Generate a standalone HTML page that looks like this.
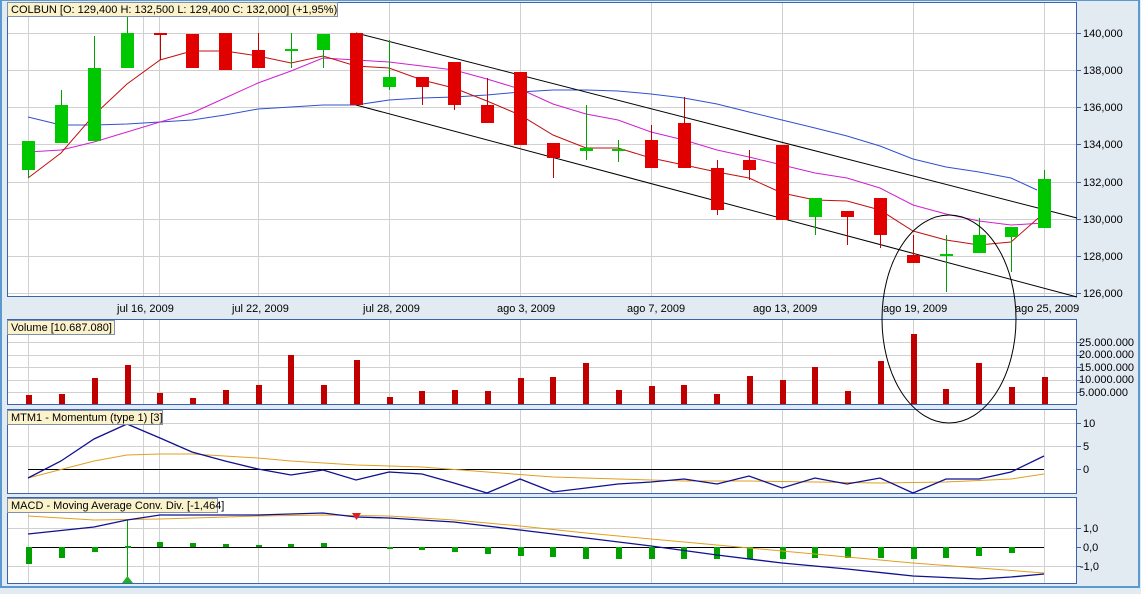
<!DOCTYPE html><html><head><meta charset="utf-8"><style>
body{margin:0;width:1141px;height:589px;overflow:hidden;background:#e2eaf2;font-family:"Liberation Sans",sans-serif}
svg text{font-family:"Liberation Sans",sans-serif;font-size:11px;fill:#000}
</style></head><body>
<svg width="1141" height="589" viewBox="0 0 1141 589" xmlns="http://www.w3.org/2000/svg">
<rect x="0" y="0" width="1141" height="589" fill="#e2eaf2"/>
<rect x="1" y="0" width="1138" height="587" fill="none" stroke="#5a9ad0" stroke-width="2"/>
<rect x="7.5" y="2.5" width="1069" height="294" fill="#fff" stroke="#3a62b0"/>
<rect x="7.5" y="319.5" width="1069" height="85" fill="#fff" stroke="#3a62b0"/>
<rect x="7.5" y="409.5" width="1069" height="84" fill="#fff" stroke="#3a62b0"/>
<rect x="7.5" y="497.5" width="1069" height="86" fill="#fff" stroke="#3a62b0"/>
<g stroke="#d0d0d0" stroke-width="1">
<path d="M8 33.5H1076M8 70.5H1076M8 107.5H1076M8 144.5H1076M8 182.5H1076M8 219.5H1076M8 256.5H1076M8 293.5H1076"/>
<path d="M8 342.5H1076M8 355.5H1076M8 367.5H1076M8 380.5H1076M8 392.5H1076"/>
<path d="M8 423.5H1076M8 446.5H1076"/>
<path d="M8 528.5H1076M8 566.5H1076"/>
<path d="M28.5 3V296M143.5 3V296M159.5 3V296M258.5 3V296M389.5 3V296M520.5 3V296M651.5 3V296M782.5 3V296M913.5 3V296M1044.5 3V296"/>
<path d="M28.5 320V404M143.5 320V404M159.5 320V404M258.5 320V404M389.5 320V404M520.5 320V404M651.5 320V404M782.5 320V404M913.5 320V404M1044.5 320V404"/>
<path d="M28.5 410V493M143.5 410V493M159.5 410V493M258.5 410V493M389.5 410V493M520.5 410V493M651.5 410V493M782.5 410V493M913.5 410V493M1044.5 410V493"/>
<path d="M28.5 498V583M143.5 498V583M159.5 498V583M258.5 498V583M389.5 498V583M520.5 498V583M651.5 498V583M782.5 498V583M913.5 498V583M1044.5 498V583"/>
</g>
<g stroke="#3a62b0"><path d="M1077 33.5h4M1077 70.5h4M1077 107.5h4M1077 144.5h4M1077 182.5h4M1077 219.5h4M1077 256.5h4M1077 293.5h4M1077 342.5h4M1077 355.5h4M1077 367.5h4M1077 380.5h4M1077 392.5h4M1077 423.5h4M1077 446.5h4M1077 469.5h4M1077 528.5h4M1077 547.5h4M1077 566.5h4"/></g>
<g>
<text x="1083" y="37">140,000</text><text x="1083" y="74">138,000</text><text x="1083" y="111">136,000</text><text x="1083" y="148">134,000</text><text x="1083" y="186">132,000</text><text x="1083" y="223">130,000</text><text x="1083" y="260">128,000</text><text x="1083" y="297">126,000</text>
<text x="1079" y="346">25.000.000</text><text x="1079" y="358">20.000.000</text><text x="1079" y="371">15.000.000</text><text x="1079" y="383">10.000.000</text><text x="1079" y="396">5.000.000</text>
<text x="1083" y="427">10</text><text x="1083" y="450">5</text><text x="1083" y="473">0</text>
<text x="1083" y="532">1,0</text><text x="1083" y="551">0,0</text><text x="1080" y="570">-1,0</text>
<text x="117" y="312">jul 16, 2009</text><text x="232" y="312">jul 22, 2009</text><text x="363" y="312">jul 28, 2009</text><text x="497" y="312">ago 3, 2009</text><text x="627" y="312">ago 7, 2009</text><text x="753" y="312">ago 13, 2009</text><text x="883" y="312">ago 19, 2009</text><text x="1015" y="312">ago 25, 2009</text>
</g>
<polyline fill="none" stroke="#3050d0" stroke-width="1" points="28,117 61,125 94,125 127,124 160,122 192,120 225,115 258,109 291,107 323,105 356,105 389,100 422,98 454,97 487,95 520,92 553,90 586,90 618,91 651,94 684,98 717,104 749,112 782,120 815,128 847,136 880,146 913,159 946,167 979,172 1011,178 1037,190"/>
<polyline fill="none" stroke="#d020d0" stroke-width="1" points="28,152 61,150 94,142 127,132 160,122 192,113 225,98 258,83 291,71 323,58 356,60 389,62 422,66 454,70 487,79 520,89 553,104 586,114 618,120 651,132 684,140 717,150 749,157 782,165 815,173 847,178 880,188 913,205 946,214 979,221 1011,225 1044,223"/>
<polyline fill="none" stroke="#c01010" stroke-width="1" points="28,178 61,153 94,115 127,84 160,60 192,51 225,51 258,56 291,63 323,56 356,66 389,68 422,80 454,88 487,101 520,115 553,135 586,148 618,148 651,158 684,165 717,172 749,178 782,193 815,200 847,201 880,210 913,231 946,240 979,245 1011,242 1044,213"/>
<path d="M356 33L1077 218M356 105L1077 297" stroke="#000" stroke-width="1"/>
<g stroke-width="1">
<g stroke="#00a000"><path d="M28.5 141V178M61.5 90V143M94.5 36V141M127.5 15V68M291.5 33V68M323.5 34V68M389.5 40V90M586.5 105V160M618.5 140V162M815.5 198V235M946.5 235V292M979.5 218V253M1011.5 227V272M1044.5 170V228"/></g>
<g stroke="#c00000"><path d="M160.5 33V60M192.5 34V68M225.5 33V70M258.5 33V68M356.5 33V105M422.5 77V105M454.5 62V110M487.5 78V123M520.5 72V145M553.5 143V178M651.5 125V168M684.5 97V168M717.5 160V215M749.5 150V180M782.5 145V220M847.5 211V245M880.5 198V248M913.5 235V263"/></g>
</g>
<g fill="#00c800">
<rect x="22" y="141" width="13" height="29"/><rect x="55" y="105" width="13" height="38"/><rect x="88" y="68" width="13" height="73"/><rect x="121" y="33" width="13" height="35"/>
<rect x="285" y="49" width="13" height="2"/><rect x="317" y="34" width="13" height="16"/><rect x="383" y="77" width="13" height="10"/>
<rect x="580" y="148" width="13" height="3"/><rect x="612" y="149" width="13" height="2"/><rect x="809" y="198" width="13" height="19"/>
<rect x="940" y="254" width="13" height="2"/><rect x="973" y="235" width="13" height="18"/><rect x="1005" y="227" width="13" height="10"/><rect x="1038" y="179" width="13" height="49"/>
</g>
<g fill="#e00000">
<rect x="154" y="33" width="13" height="2"/><rect x="186" y="34" width="13" height="34"/><rect x="219" y="33" width="13" height="37"/><rect x="252" y="50" width="13" height="18"/>
<rect x="350" y="33" width="13" height="72"/><rect x="416" y="77" width="13" height="10"/><rect x="448" y="62" width="13" height="43"/><rect x="481" y="105" width="13" height="18"/><rect x="514" y="72" width="13" height="73"/><rect x="547" y="143" width="13" height="15"/>
<rect x="645" y="140" width="13" height="28"/><rect x="678" y="123" width="13" height="45"/><rect x="711" y="168" width="13" height="42"/><rect x="743" y="160" width="13" height="10"/><rect x="776" y="145" width="13" height="75"/>
<rect x="841" y="211" width="13" height="6"/><rect x="874" y="198" width="13" height="37"/><rect x="907" y="255" width="13" height="8"/>
</g>
<g fill="#c00000">
<rect x="26" y="395" width="6" height="9"/><rect x="59" y="394" width="6" height="10"/><rect x="92" y="378" width="6" height="26"/><rect x="125" y="365" width="6" height="39"/><rect x="157" y="393" width="6" height="11"/><rect x="190" y="398" width="6" height="6"/><rect x="223" y="390" width="6" height="14"/><rect x="256" y="385" width="6" height="19"/><rect x="288" y="355" width="6" height="49"/><rect x="321" y="385" width="6" height="19"/><rect x="354" y="360" width="6" height="44"/><rect x="387" y="397" width="6" height="7"/><rect x="419" y="391" width="6" height="13"/><rect x="452" y="390" width="6" height="14"/><rect x="485" y="391" width="6" height="13"/><rect x="518" y="378" width="6" height="26"/><rect x="550" y="377" width="6" height="27"/><rect x="583" y="363" width="6" height="41"/><rect x="616" y="390" width="6" height="14"/><rect x="649" y="386" width="6" height="18"/><rect x="681" y="385" width="6" height="19"/><rect x="714" y="394" width="6" height="10"/><rect x="747" y="376" width="6" height="28"/><rect x="780" y="380" width="6" height="24"/><rect x="812" y="367" width="6" height="37"/><rect x="845" y="391" width="6" height="13"/><rect x="878" y="361" width="6" height="43"/><rect x="911" y="334" width="6" height="70"/><rect x="943" y="389" width="6" height="15"/><rect x="976" y="363" width="6" height="41"/><rect x="1009" y="387" width="6" height="17"/><rect x="1042" y="377" width="6" height="27"/>
</g>
<path d="M28 469.5H1044" stroke="#000"/>
<polyline fill="none" stroke="#e0a020" points="28,478 94,461 127,455 160,454 192,454 258,458 291,461 356,465 422,467 487,472 553,477 618,479 684,481 749,481 815,482 880,483 946,482 1011,479 1044,474"/>
<polyline fill="none" stroke="#101090" stroke-width="1.3" points="28,478 61,461 94,439 127,424 160,438 192,452 225,461 258,469 291,475 323,470 356,480 389,472 422,474 454,483 487,493 520,479 553,492 586,488 618,484 651,482 684,479 717,484 749,476 782,488 815,478 847,484 880,478 913,493 946,479 979,479 1011,472 1044,456"/>
<path d="M28 547.5H1044" stroke="#000"/>
<g fill="#00a000">
<rect x="26" y="547" width="6" height="17"/><rect x="59" y="547" width="6" height="11"/><rect x="92" y="547" width="6" height="5"/><rect x="125" y="546" width="6" height="2"/><rect x="157" y="542" width="6" height="5"/><rect x="190" y="543" width="6" height="4"/><rect x="223" y="544" width="6" height="3"/><rect x="256" y="545" width="6" height="2"/><rect x="288" y="544" width="6" height="3"/><rect x="321" y="543" width="6" height="4"/><rect x="387" y="547" width="6" height="2"/><rect x="419" y="547" width="6" height="3"/><rect x="452" y="547" width="6" height="5"/><rect x="485" y="547" width="6" height="7"/><rect x="518" y="547" width="6" height="9"/><rect x="550" y="547" width="6" height="10"/><rect x="583" y="547" width="6" height="12"/><rect x="616" y="547" width="6" height="12"/><rect x="649" y="547" width="6" height="12"/><rect x="681" y="547" width="6" height="12"/><rect x="714" y="547" width="6" height="12"/><rect x="747" y="547" width="6" height="12"/><rect x="780" y="547" width="6" height="12"/><rect x="812" y="547" width="6" height="11"/><rect x="845" y="547" width="6" height="11"/><rect x="878" y="547" width="6" height="11"/><rect x="911" y="547" width="6" height="12"/><rect x="943" y="547" width="6" height="11"/><rect x="976" y="547" width="6" height="9"/><rect x="1009" y="547" width="6" height="6"/>
</g>
<path d="M127.5 520V578" stroke="#00a000"/>
<polyline fill="none" stroke="#e0a020" points="28,516 94,520 160,519 258,516 323,515 389,516 454,520 520,526 586,533 651,539 717,545 782,551 847,557 913,563 979,568 1044,573"/>
<polyline fill="none" stroke="#101090" stroke-width="1.3" points="28,534 94,527 127,520 160,515 258,515 323,513 356,517 389,518 454,522 520,530 586,538 651,546 717,555 782,563 847,569 913,576 979,579 1011,577 1044,574"/>
<path d="M122 583L127.5 576L133 583Z" fill="#20b020"/>
<path d="M352 513L356.5 520L361 513Z" fill="#e02020"/>
<ellipse cx="949" cy="319" rx="67" ry="104" fill="none" stroke="#000"/>
<g>
<rect x="7.5" y="2.5" width="330" height="14" fill="#fbf3cc" stroke="#8090b0"/><text x="11" y="13">COLBUN [O: 129,400 H: 132,500 L: 129,400 C: 132,000] (+1,95%)</text>
<rect x="7.5" y="320.5" width="107" height="14" fill="#fbf3cc" stroke="#8090b0"/><text x="11" y="331">Volume [10.687.080]</text>
<rect x="7.5" y="410.5" width="155" height="14" fill="#fbf3cc" stroke="#8090b0"/><text x="11" y="421">MTM1 - Momentum (type 1) [3]</text>
<rect x="7.5" y="498.5" width="210" height="14" fill="#fbf3cc" stroke="#8090b0"/><text x="11" y="509">MACD - Moving Average Conv. Div. [-1,464]</text>
</g>
</svg>
</body></html>
